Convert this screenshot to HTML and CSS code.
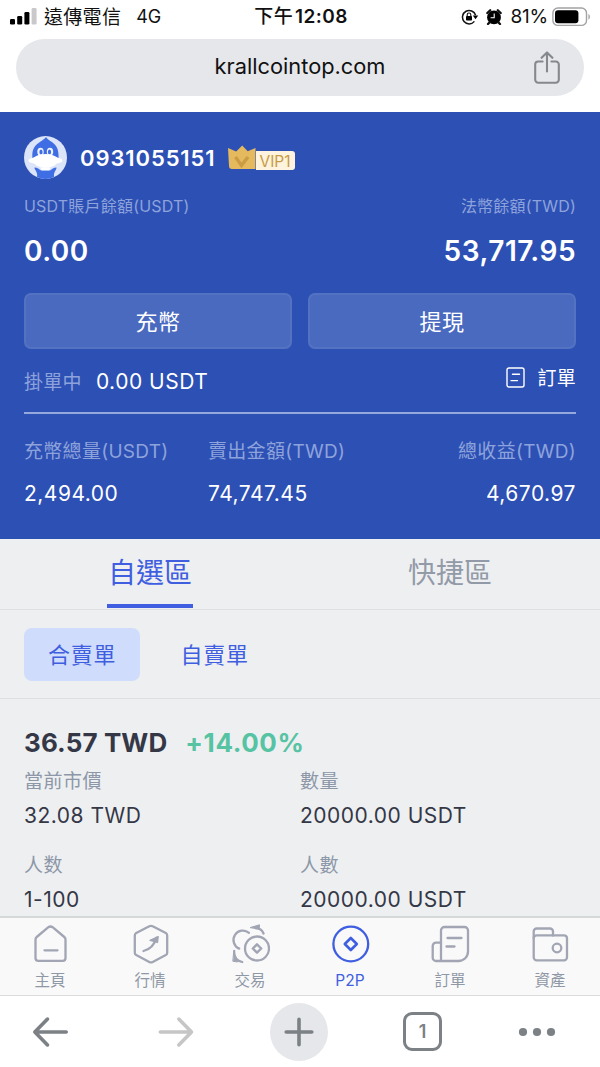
FILE: index.html
```html
<!DOCTYPE html>
<html lang="zh-Hant">
<head>
<meta charset="UTF-8">
<meta name="viewport" content="width=device-width, initial-scale=1">
<title>P2P</title>
<link rel="stylesheet" href="styles.css">
</head>
<body>
<div class="screen">

  <!-- Status bar -->
  <div class="status">
    <div class="status-left">
      <svg class="signal" width="27" height="18" viewBox="0 0 27 18">
        <rect x="0" y="12" width="5" height="5.5" rx="1.3"/>
        <rect x="7.2" y="9" width="5" height="8.5" rx="1.3"/>
        <rect x="14.4" y="5" width="5" height="12.5" rx="1.3"/>
        <rect x="21.6" y="1" width="5" height="16.5" rx="1.3" fill="#c9c9cb"/>
      </svg>
      <span class="carrier">遠傳電信</span>
      <span class="net">4G</span>
    </div>
    <div class="clock"><span class="ampm">下午</span>12:08</div>
    <div class="status-right">
      <svg width="18" height="16" viewBox="0 0 18 16">
        <path d="M14.6 6.2A6.7 6.7 0 1 0 13.4 12.4" fill="none" stroke="#111" stroke-width="1.5"/>
        <path d="M11.8 6.4h5.4l-2.7 3.8z"/>
        <rect x="5" y="7" width="6" height="4.6" rx=".8"/>
        <path d="M6.2 7V5.8a1.8 1.8 0 0 1 3.6 0V7" fill="none" stroke="#111" stroke-width="1.1"/>
      </svg>
      <svg class="alarm" width="16" height="16" viewBox="0 0 16 16">
        <circle cx="8" cy="8.4" r="6.9"/>
        <path d="M1.300 4 4.200 1.300M14.700 4 11.800 1.300M3.600 13.400 2 15M12.400 13.400 14 15" stroke="#111" stroke-width="2.300" stroke-linecap="round"/>
        <path d="M8.200 4.400v4.300H4.600" fill="none" stroke="#fff" stroke-width="1.100"/>
      </svg>
      <span class="percent">81%</span>
      <svg width="40" height="20" viewBox="0 0 40 20">
        <rect x=".9" y="1" width="33.6" height="17.4" rx="5" fill="none" stroke="#a3a3a5" stroke-width="1.4"/>
        <rect x="3" y="3.2" width="23.4" height="13" rx="3"/>
        <path d="M36.4 7v5.6c2-.8 2-4.8 0-5.6z" fill="#a3a3a5"/>
      </svg>
    </div>
  </div>

  <!-- Address bar -->
  <div class="address">
    <span>krallcointop.com</span>
    <svg class="share" width="28" height="34" viewBox="0 0 28 34" fill="none" stroke="#85888d" stroke-width="2.1" stroke-linecap="round" stroke-linejoin="round">
      <path d="M9.6 10.5H5.2a3 3 0 0 0-3 3v15.2a3 3 0 0 0 3 3h17.6a3 3 0 0 0 3-3V13.500a3 3 0 0 0-3-3h-4.400"/>
      <path d="M14 20.500V1.600M8.600 6.800 14 1.400l5.400 5.400"/>
    </svg>
  </div>

  <!-- Account summary -->
  <section class="account">
    <div class="user">
      <svg class="avatar" width="43" height="43" viewBox="0 0 43 43">
        <circle cx="21.5" cy="21.5" r="21.5" fill="#dbe4f8"/>
        <path d="M22 1c2 3.500 7 4.500 10 9 3 4.500 2.500 10 2.500 15h-26c0-5-1-9.500 2-14C13.500 6.500 19 5 22 1z" fill="#3f6de3"/>
        <path d="M10.500 31.500c3 0 4.500 1.500 6.500 3h9c2-1.500 3.500-3 6.500-3 0 3-3 4-2.500 9.500a21 21 0 0 1-17 0c1-5.500-2.500-6.500-2.500-9.500z" fill="#3f6de3"/>
        <ellipse cx="16.500" cy="15.700" rx="3.200" ry="4" fill="#eef3fd"/>
        <ellipse cx="26" cy="15.700" rx="3.200" ry="4" fill="#eef3fd"/>
        <ellipse cx="17" cy="16" rx="1.600" ry="2.500" fill="#3f6de3"/>
        <ellipse cx="25.500" cy="16" rx="1.600" ry="2.500" fill="#3f6de3"/>
        <path d="M4.500 24.500c0-2.200 3-1.700 5.500-3.200 4-2.500 7-3.300 11.500-3.300s7.500.8 11.500 3.300c2.500 1.500 5.500 1 5.500 3.200 0 2.500-3 2-5.500 3-3 3-7 4.300-11.500 4.300s-8.500-1.300-11.500-4.300c-2.500-1-5.500-.5-5.500-3z" fill="#fff"/>
        <path d="M16 31.500h11l-2 2.800h-7z" fill="#fff"/>
      </svg>
      <span class="phone">0931055151</span>
      <div class="vip">
        <svg class="crown" width="28" height="25" viewBox="0 0 28 25">
          <path d="M0 3 8.200 6.500 14.200.6l5.500 5.600L27.500 3v21H4a3 3 0 0 1-3-3z" fill="#e5b95d"/>
          <path d="M7.500 12l6 8.500L20 12" fill="none" stroke="#cb9c44" stroke-width="3.400"/>
        </svg>
        <span class="level">VIP1</span>
      </div>
    </div>

    <div class="split caption">
      <span>USDT賬戶餘額(USDT)</span>
      <span>法幣餘額(TWD)</span>
    </div>
    <div class="split balance">
      <span>0.00</span>
      <span>53,717.95</span>
    </div>

    <div class="actions">
      <button>充幣</button>
      <button>提現</button>
    </div>

    <div class="pending">
      <div class="held"><span class="muted">掛單中</span><span class="held-value">0.00 USDT</span></div>
      <div class="orders">
        <svg width="19" height="21" viewBox="0 0 19 21" fill="none" stroke="#fff" stroke-width="1.400" stroke-linecap="round">
          <rect x="1" y="1" width="17" height="19" rx="2"/>
          <path d="M6.500 7.300h7M5 13.600h6.500"/>
        </svg>
        <span>訂單</span>
      </div>
    </div>

    <div class="totals">
      <div><p class="muted">充幣總量(USDT)</p><p class="figure">2,494.00</p></div>
      <div><p class="muted">賣出金額(TWD)</p><p class="figure">74,747.45</p></div>
      <div><p class="muted">總收益(TWD)</p><p class="figure">4,670.97</p></div>
    </div>
  </section>

  <!-- Order area -->
  <main class="market">
    <div class="tabs">
      <div class="tab active"><span>自選區</span></div>
      <div class="tab"><span>快捷區</span></div>
    </div>
    <div class="chips">
      <span class="chip active">合賣單</span>
      <span class="chip">自賣單</span>
    </div>
    <div class="offer">
      <div class="price"><span>36.57 TWD</span><span class="gain">+14.00%</span></div>
      <dl class="details">
        <div><dt>當前市價</dt><dd>32.08 TWD</dd></div>
        <div><dt>數量</dt><dd>20000.00 USDT</dd></div>
        <div><dt>人数</dt><dd>1-100</dd></div>
        <div><dt>人數</dt><dd>20000.00 USDT</dd></div>
      </dl>
    </div>
  </main>

  <!-- App navigation -->
  <nav class="nav">
    <a>
      <svg viewBox="0 0 40 40"><path d="M18.100 3.400a4 4 0 0 1 4.800 0L34.300 13a3 3 0 0 1 1.200 2.400V34a2.800 2.800 0 0 1-2.800 2.800H8.300A2.800 2.800 0 0 1 5.500 34V15.400A3 3 0 0 1 6.700 13z"/><path d="M14.500 26.300h13"/></svg>
      <span>主頁</span>
    </a>
    <a>
      <svg viewBox="0 0 40 40"><path d="M19.300 2.300a3.500 3.500 0 0 1 3.400 0L35.800 9.100a2.800 2.800 0 0 1 1.400 2.500v17a2.800 2.800 0 0 1-1.400 2.500l-13.100 6.800a3.500 3.500 0 0 1-3.400 0L6.200 31.100a2.800 2.800 0 0 1-1.400-2.500v-17a2.800 2.800 0 0 1 1.400-2.500z"/><path d="M13.500 27c7.500-2 11-6.500 13-13.200"/><path d="M20 16.300l8.200-3.700-.7 5.900z" fill="#a2a5b3" stroke-width="1.300"/></svg>
      <span>行情</span>
    </a>
    <a>
      <svg viewBox="0 0 40 40"><path d="M9.200 24.600A9.400 9.400 0 1 1 19 8.800"/><circle cx="27" cy="24.500" r="12"/><path d="M27 20.300l4.200 4.200-4.200 4.200-4.200-4.200z" stroke-width="2.400"/><path d="M25.500 4.200c4 0 6.800 2 8 5.300M4.200 27c-.4 5.500 2.300 9.600 8 11"/><path d="M20.500 3.500l9-2.700-.2 4zM3.800 28.500l3.800 9.500-4.400-.7z" fill="#a2a5b3" stroke-width="1"/></svg>
      <span>交易</span>
    </a>
    <a class="active">
      <svg viewBox="0 0 40 40"><circle cx="20.800" cy="20" r="17.400"/><path d="M20.800 14l6 6-6 6-6-6z" stroke-width="2.600"/></svg>
      <span>P2P</span>
    </a>
    <a>
      <svg viewBox="0 0 40 40"><path d="M11 37H6a3.300 3.300 0 0 1-3.300-3.300V22A3.300 3.300 0 0 1 6 18.700h5M11 37V6.500A3.500 3.500 0 0 1 14.500 3h20A3.500 3.500 0 0 1 38 6.500v21A9.500 9.500 0 0 1 28.500 37z"/><path d="M17.500 14h14M16.500 22.500h8"/></svg>
      <span>訂單</span>
    </a>
    <a>
      <svg viewBox="0 0 40 40"><path d="M3.700 14V7.500A3 3 0 0 1 6.700 4.500H20a3 3 0 0 1 3 3v4"/><rect x="3.700" y="11.300" width="33.300" height="25" rx="3"/><circle cx="27" cy="24" r="4.300"/></svg>
      <span>資產</span>
    </a>
  </nav>

  <!-- Browser toolbar -->
  <div class="toolbar">
    <svg class="back" width="40" height="32" viewBox="0 0 40 32" stroke="#7c8185"><path d="M35.200 16H3.800M16.500 3.100 3.800 16l12.700 12.900"/></svg>
    <svg width="40" height="32" viewBox="0 0 40 32" stroke="#c6c6c7"><path d="M5.300 16h31.200M23.800 3.100 36.500 16 23.800 28.900"/></svg>
    <div class="add"><svg width="32" height="32" viewBox="0 0 32 32" stroke="#7c8185"><path d="M16 3.200v25.600M3.200 16h25.600"/></svg></div>
    <div class="tabcount">1</div>
    <svg width="40" height="10" viewBox="0 0 40 10"><g fill="#7c8185"><circle cx="6" cy="5" r="4.100"/><circle cx="20" cy="5" r="4.100"/><circle cx="34" cy="5" r="4.100"/></g></svg>
  </div>
</div>
</body>
</html>
```
FILE: styles.css
```css
*{box-sizing:border-box;}
body{margin:0;background:#fff;font-family:Inter, "Noto Sans CJK TC", sans-serif;color:#111;}
p,dl,dd{margin:0;}
svg{display:block;flex:none;}
.screen{width:600px;height:1067px;display:flex;flex-direction:column;overflow:hidden;white-space:nowrap;}

.status{height:39px;padding:0 8px 6px 10px;display:grid;grid-template-columns:1fr auto 1fr;align-items:center;font-size:19px;line-height:24px;}
.status-left{display:flex;align-items:center;}
.signal{margin-bottom:2px;}
.carrier{margin-left:7px;padding-top:2px;letter-spacing:.3px;}
.net{margin-left:15px;font-size:18px;}
.clock{font-weight:600;font-size:19px;letter-spacing:.4px;padding-top:1px;}
.ampm{margin-right:2px;font-weight:500;}
.status-right{display:flex;align-items:center;justify-content:flex-end;}
.alarm{margin:0 8px 0 7px;}
.percent{font-size:19px;letter-spacing:-.2px;margin-right:4px;}

.address{position:relative;height:57px;margin:0 16px 16px;border-radius:29px;background:#e6e7eb;display:flex;align-items:center;justify-content:center;font-size:21.800px;padding-bottom:3px;flex:none;}
.share{position:absolute;right:23px;top:12px;}

/* Account summary */
.account{height:427px;flex:none;background:#2d50b5;color:#fff;padding:24px 24px 0;letter-spacing:.5px;}
.user{display:flex;align-items:center;height:43px;}
.phone{margin-left:13px;font-size:22px;font-weight:600;letter-spacing:.9px;}
.vip{display:flex;align-items:flex-end;height:25px;margin-left:12px;}
.crown{z-index:1;}
.level{height:19px;width:39px;background:#fdf3df;color:#c99b45;font-size:15.500px;line-height:22px;text-align:center;border-radius:0 3px 3px 0;letter-spacing:0;}
.split{display:flex;justify-content:space-between;}
.caption{margin-top:15px;font-size:16px;line-height:24px;color:#8ea3db;letter-spacing:.2px;}
.balance{margin-top:15px;font-size:28px;line-height:36px;font-weight:600;}
.actions{display:grid;grid-template-columns:1fr 1fr;gap:16px;margin-top:24px;}
.actions button{height:56px;padding:0 0 2px;border:2px solid #5472c2;border-radius:7px;background:#4a6abf;color:#fff;font:inherit;font-size:22px;letter-spacing:.5px;}
.pending{display:flex;justify-content:space-between;height:65px;padding-top:14px;border-bottom:2px solid #94a8dc;line-height:28px;}
.held{padding-top:5px;font-size:21px;}
.muted{font-size:19px;color:#8ea3db;letter-spacing:.3px;}
.held-value{margin-left:14px;}
.orders{display:flex;align-items:center;gap:12px;height:28px;font-size:19px;}
.orders span{padding-top:3px;letter-spacing:.3px;}
.totals{display:grid;grid-template-columns:184px 1fr auto;padding-top:24px;line-height:28px;}
.totals>div:last-child{text-align:right;}
.figure{margin-top:14px;font-size:21px;}

/* Order area */
.market{flex:1;min-height:0;overflow:hidden;background:#eeeff1;color:#343746;}
.tabs{display:grid;grid-template-columns:1fr 1fr;height:71px;border-bottom:1px solid #dddfe3;font-size:28px;text-align:center;color:#929aa8;}
.tab span{display:inline-block;height:69px;line-height:69px;}
.tab.active span{color:#3f5fe0;border-bottom:4px solid #3f5fe0;padding:0 1px;}
.chips{display:flex;gap:16px;height:89px;padding:18px 24px;border-bottom:1px solid #dddfe3;font-size:22px;color:#3f5fe0;}
.chip{height:53px;line-height:54px;padding:0 24px;border-radius:8px;letter-spacing:.8px;}
.chip.active{background:#cfdcfb;}
.offer{padding:27px 24px 0;letter-spacing:.5px;}
.price{font-size:26px;line-height:34px;font-weight:700;letter-spacing:.1px;}
.gain{margin-left:18px;color:#56c3a2;letter-spacing:.6px;}
.details{display:grid;grid-template-columns:1fr 1fr;row-gap:21px;margin-top:7px;}
dt{font-size:19px;line-height:30px;color:#8c97a8;}
dd{font-size:21px;line-height:28px;margin-top:5px;}

.nav{height:80px;flex:none;display:grid;grid-template-columns:repeat(6,1fr);background:#f9f9f9;border-top:2px solid #d6d9da;border-bottom:1px solid #dcdcdc;}
.nav a{display:flex;flex-direction:column;align-items:center;padding-top:6px;font-size:15.500px;line-height:20px;color:#8f98a6;}
.nav svg{width:40px;height:40px;fill:none;stroke:#a2a5b3;stroke-width:2.300;stroke-linecap:round;stroke-linejoin:round;}
.nav span{margin-top:7px;}
.nav .active{color:#3f5fe0;}
.nav .active svg{stroke:#3f5fe0;}

.toolbar{height:71px;flex:none;display:flex;justify-content:space-between;align-items:center;padding:0 43px 0 31px;background:#fff;}
.toolbar svg{fill:none;stroke-width:3.600;stroke-linecap:round;stroke-linejoin:round;}
.back{margin-right:9px;}
.add{width:58px;height:58px;border-radius:50%;background:#e6e7eb;display:flex;align-items:center;justify-content:center;}
.tabcount{width:39px;height:39px;border:3px solid #7c8185;border-radius:9px;color:#7c8185;font-size:18px;font-weight:600;line-height:34px;text-align:center;}
```
